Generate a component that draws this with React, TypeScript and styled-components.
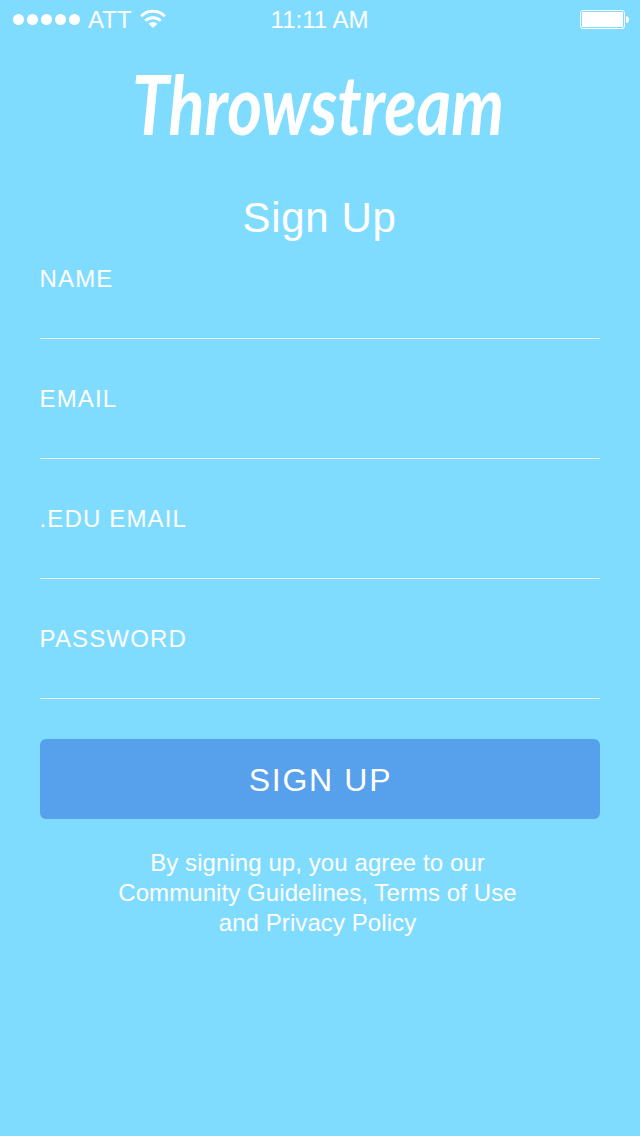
import React from "react";
import styled, { createGlobalStyle } from "styled-components";

const GlobalStyle = createGlobalStyle`
  * { box-sizing: border-box; }
  body {
    margin: 0;
    background: #80dcff;
    color: #fff;
    font-family: "Liberation Sans", Helvetica, Arial, sans-serif;
  }
`;

const Screen = styled.div`
  min-height: 1136px;
  display: flex;
  flex-direction: column;
`;

const StatusBar = styled.header`
  display: grid;
  grid-template-columns: 1fr auto 1fr;
  align-items: center;
  height: 40px;
  padding: 0 11px 0 13px;
  font-size: 24px;
  line-height: 40px;
`;

const Carrier = styled.div`
  display: flex;
  align-items: center;
`;

const Signal = styled.div`
  display: flex;
  gap: 3px;
  margin: -1px 8px 0 0;
`;

const Dot = styled.i`
  width: 11px;
  height: 11px;
  border-radius: 50%;
  background: #fff;
`;

const StatusText = styled.span<{ $spacing: string }>`
  letter-spacing: ${(p) => p.$spacing};
`;

const Clock = styled(StatusText)`
  margin-right: 3px;
`;

const WifiIcon = styled.svg`
  margin: -2px 0 0 8px;
  flex: none;
`;

const BatteryIcon = styled.svg`
  justify-self: end;
`;

const Logo = styled.svg`
  display: block;
  margin: 20px auto 0;
  flex: none;
  overflow: visible;
`;

const LogoText = styled.text`
  font-family: Lato, "Liberation Sans", sans-serif;
  font-size: 82px;
  font-style: italic;
  font-weight: 700;
  fill: #fff;
`;

const Title = styled.h1`
  margin: 42px 0 0;
  height: 52px;
  padding-right: 1px;
  line-height: 52px;
  font-size: 42px;
  font-weight: 400;
  letter-spacing: 0.65px;
  text-align: center;
`;

const Form = styled.form`
  display: flex;
  flex-direction: column;
  padding: 15px 40px 0;
`;

const Field = styled.label`
  height: 80px;
  margin-bottom: 40px;
  border-bottom: 1px solid #e4f8ff;
  font-size: 24px;
  line-height: 40px;
`;

const FieldName = styled.span`
  display: block;
  margin-left: -0.5px;
  letter-spacing: 1.15px;
`;

const SubmitButton = styled.button`
  height: 80px;
  padding: 2px 0 0 1px;
  border: 0;
  border-radius: 6px;
  background: #57a0eb;
  color: #fff;
  font: inherit;
  font-size: 32px;
  letter-spacing: 1.7px;
`;

const Terms = styled.p`
  margin: 29px 0 0;
  padding-right: 5px;
  font-size: 24px;
  line-height: 30px;
  text-align: center;
  letter-spacing: 0.08px;
`;

const TermsLine = styled.span`
  display: block;
`;

const fields = ["NAME", "EMAIL", ".EDU EMAIL", "PASSWORD"];

export default function App() {
  return (
    <Screen>
      <GlobalStyle />
      <StatusBar>
        <Carrier>
          <Signal>
            {[0, 1, 2, 3, 4].map((n) => (
              <Dot key={n} />
            ))}
          </Signal>
          <StatusText $spacing="0px">ATT</StatusText>
          <WifiIcon width="26" height="20" viewBox="0 0 26 20" fill="none" stroke="#fff" strokeWidth="3">
            <path d="M1.2 7.2A16.8 16.8 0 0 1 24.8 7.2" />
            <path d="M5.3 11.8A11 11 0 0 1 20.7 11.8" />
            <path d="M13 19L8.6 14.7A6.4 6.4 0 0 1 17.4 14.7Z" fill="#fff" stroke="none" />
          </WifiIcon>
        </Carrier>
        <Clock $spacing="0px">11:11 AM</Clock>
        <BatteryIcon width="49" height="20" viewBox="0 0 49 20">
          <rect x="0.5" y="0.5" width="44" height="18" rx="2.5" fill="none" stroke="#fff" />
          <rect x="2" y="2" width="41" height="15" rx="0.5" fill="#fff" />
          <path d="M46 6Q49 6.5 49 9.5Q49 12.5 46 13Z" fill="#fff" />
        </BatteryIcon>
      </StatusBar>
      <Logo width="380" height="90" viewBox="0 0 380 90" role="img" aria-label="Throwstream">
        <LogoText x="2" y="75" textLength="372" lengthAdjust="spacingAndGlyphs">
          Throwstream
        </LogoText>
      </Logo>
      <Title>Sign Up</Title>
      <Form onSubmit={(e) => e.preventDefault()}>
        {fields.map((name) => (
          <Field key={name}>
            <FieldName>{name}</FieldName>
          </Field>
        ))}
        <SubmitButton type="submit">SIGN UP</SubmitButton>
        <Terms>
          <TermsLine>By signing up, you agree to our</TermsLine>
          <TermsLine>Community Guidelines, Terms of Use</TermsLine>
          <TermsLine>and Privacy Policy</TermsLine>
        </Terms>
      </Form>
    </Screen>
  );
}
